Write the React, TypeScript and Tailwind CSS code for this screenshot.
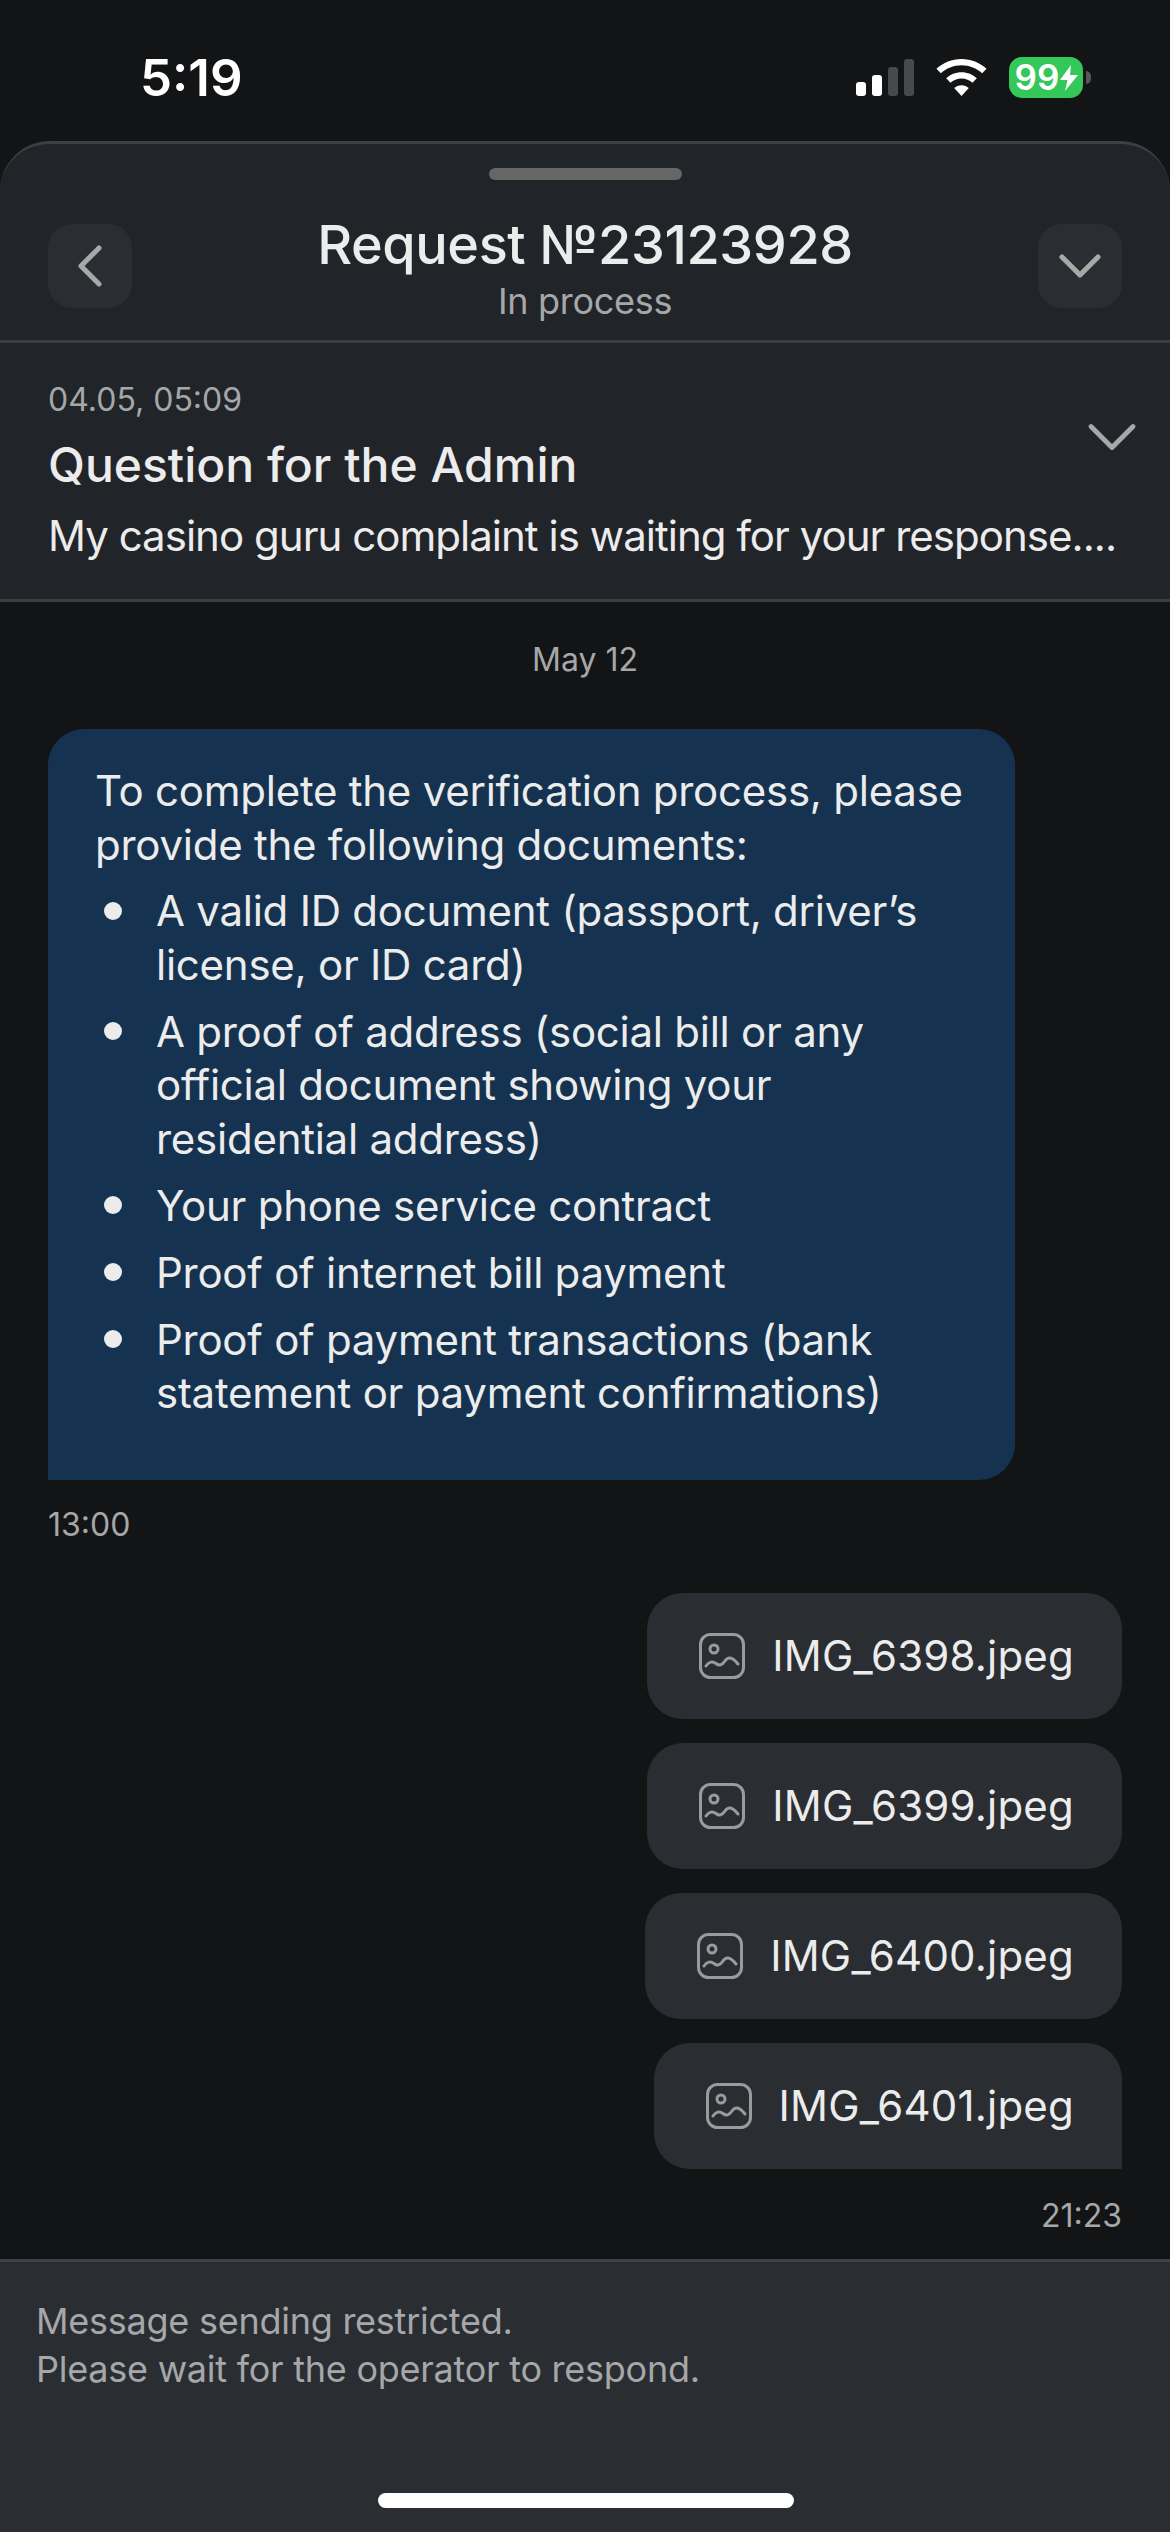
import { ChevronDown, ChevronLeft } from 'lucide-react';

const files = ['IMG_6398.jpeg', 'IMG_6399.jpeg', 'IMG_6400.jpeg', 'IMG_6401.jpeg'];

const bullets = [
  'A valid ID document (passport, driver’s license, or ID card)',
  'A proof of address (social bill or any official document showing your residential address)',
  'Your phone service contract',
  'Proof of internet bill payment',
  'Proof of payment transactions (bank statement or payment confirmations)',
];

function SignalIcon() {
  return (
    <svg width="58" height="37" viewBox="0 0 58 37">
      <rect x="0" y="23" width="10" height="14" rx="3" fill="#fff" />
      <rect x="16" y="16" width="10" height="21" rx="3" fill="#fff" />
      <rect x="32" y="8" width="10" height="29" rx="3" fill="#48494c" />
      <rect x="48" y="0" width="10" height="37" rx="3" fill="#48494c" />
    </svg>
  );
}

function WifiIcon() {
  return (
    <svg width="51" height="37" viewBox="0 0 51 37">
      <path d="M25.5 0C35 0 43.800 3.700 50.500 9.700L46.200 14.300C40.700 9.300 33.400 6.300 25.500 6.300C17.600 6.300 10.300 9.300 4.800 14.300L0.500 9.700C7.200 3.700 16 0 25.500 0Z" fill="#fff" />
      <path d="M25.500 13.200C31.400 13.200 36.800 15.500 40.800 19.200L36.500 23.800C33.600 21.200 29.700 19.500 25.500 19.500C21.300 19.500 17.400 21.200 14.500 23.800L10.200 19.200C14.200 15.500 19.600 13.200 25.500 13.200Z" fill="#fff" />
      <path d="M25.500 26.300C28.300 26.300 30.900 27.400 32.800 29.100L25.500 37L18.200 29.100C20.100 27.400 22.700 26.300 25.500 26.300Z" fill="#fff" />
    </svg>
  );
}

function BatteryIcon() {
  return (
    <div className="flex items-center">
      <div className="flex h-[41px] w-[74px] items-center justify-center rounded-[13px] bg-[#34c759] pl-[1px]">
        <span className="text-[35px] leading-none font-semibold text-white">99</span>
        <svg width="18" height="26" viewBox="0 0 18 26" className="ml-[1px]">
          <path d="M11 0L0 15H7.500L5 26L18 10H10Z" fill="#fff" />
        </svg>
      </div>
      <div className="ml-[3px] h-[13px] w-[5px] rounded-r-full bg-[#55565a]" />
    </div>
  );
}

function ImageIcon() {
  return (
    <svg width="46" height="46" viewBox="0 0 46 46" fill="none" stroke="#9a9b9d" strokeWidth="3" strokeLinecap="round">
      <rect x="1.500" y="1.500" width="43" height="43" rx="10" />
      <circle cx="15" cy="16" r="4" />
      <path d="M7 33C10 28.500 13.500 28 17 30.500C20 33 23 32.500 26 28C29 23.500 33 23.500 39 31" strokeLinejoin="round" />
    </svg>
  );
}

export default function App() {
  return (
    <div className="flex h-[2532px] w-[1170px] flex-col overflow-hidden bg-[#131416] font-['Inter',sans-serif] text-[#ececec]">
      <div className="flex h-[141px] shrink-0 items-start justify-between pt-[57px] pr-[79px] pl-[140px]">
        <span className="text-[51px] leading-[42px] font-semibold text-white">5:19</span>
        <div className="flex items-center gap-[22px]">
          <SignalIcon />
          <WifiIcon />
          <BatteryIcon />
        </div>
      </div>

      <div className="shrink-0 rounded-t-[50px] border-t-[3px] border-[#3c3e44] bg-[#212429]">
        <div className="flex justify-center pt-[24px]">
          <div className="h-[12px] w-[193px] rounded-full bg-[#666666]" />
        </div>
        <div className="flex h-[160px] items-start justify-between px-[48px] pt-[44px]">
          <button className="flex h-[84px] w-[84px] items-center justify-center rounded-[24px] bg-[#2a2d32]">
            <ChevronLeft size={72} color="#a8a8a8" strokeWidth={1.7} />
          </button>
          <div className="-mt-[14px] text-center">
            <div className="text-[54px] leading-[69px] font-medium tracking-[-0.4px]">Request №23123928</div>
            <div className="text-[36px] leading-[44px] tracking-[-0.3px] text-[#a6a7a9]">In process</div>
          </div>
          <button className="flex h-[84px] w-[84px] items-center justify-center rounded-[24px] bg-[#2a2d32]">
            <ChevronDown size={72} color="#a8a8a8" strokeWidth={1.7} />
          </button>
        </div>
      </div>

      <div className="relative shrink-0 border-y-[3px] border-[#3c3e44] bg-[#212429] px-[48px] pt-[37px] pb-[35px]">
        <div className="text-[32px] leading-[40px] text-[#a6a7a9]">04.05, 05:09</div>
        <div className="mt-[15px] text-[48px] leading-[60px] font-medium">Question for the Admin</div>
        <div className="mt-[13px] text-[42px] leading-[56px] tracking-[-0.97px] whitespace-nowrap">
          My casino guru complaint is waiting for your response....
        </div>
        <ChevronDown size={84} color="#a8a8a8" strokeWidth={1.4} className="absolute top-[52px] right-[16px]" />
      </div>

      <div className="flex min-h-0 flex-1 flex-col px-[48px]">
        <div className="pt-[38px] text-center text-[32px] leading-[40px] text-[#a6a7a9]">May 12</div>

        <div className="mt-[49px] w-[967px] rounded-[36px] rounded-bl-none bg-[#153350] pt-[35px] pr-[50px] pb-[60px] pl-[47px] text-[42px] leading-[53.500px] tracking-[-0.25px]">
          <p>To complete the verification process, please provide the following documents:</p>
          <ul className="mt-[13px] flex flex-col gap-[13.500px]">
            {bullets.map((text) => (
              <li key={text} className="flex">
                <div className="flex h-[53.500px] w-[61px] shrink-0 items-center pl-[9px]">
                  <div className="h-[18px] w-[18px] rounded-full bg-[#ececec]" />
                </div>
                <span>{text}</span>
              </li>
            ))}
          </ul>
        </div>
        <div className="mt-[25px] text-[32px] leading-[40px] text-[#a6a7a9]">13:00</div>

        <div className="mt-[48px] flex flex-col items-end gap-[24px]">
          {files.map((name, i) => (
            <div
              key={name}
              className={`flex h-[126px] items-center gap-[27px] rounded-[36px] bg-[#2a2d32] pr-[48px] pl-[52px] ${i === files.length - 1 ? 'rounded-br-none' : ''}`}
            >
              <ImageIcon />
              <span className="text-[42px] leading-none tracking-[0.2px]">{name}</span>
            </div>
          ))}
        </div>
        <div className="mt-[27px] text-right text-[32px] leading-[40px] text-[#a6a7a9]">21:23</div>
      </div>

      <div className="relative h-[273px] shrink-0 border-t-[3px] border-[#3f4148] bg-[#2a2d32] px-[36px]">
        <div className="pt-[35px] text-[36px] leading-[48px] tracking-[-0.25px] text-[#a6a7a9]">
          <div>Message sending restricted.</div>
          <div>Please wait for the operator to respond.</div>
        </div>
        <div className="absolute bottom-[24px] left-[378px] h-[15px] w-[416px] rounded-full bg-white" />
      </div>
    </div>
  );
}
